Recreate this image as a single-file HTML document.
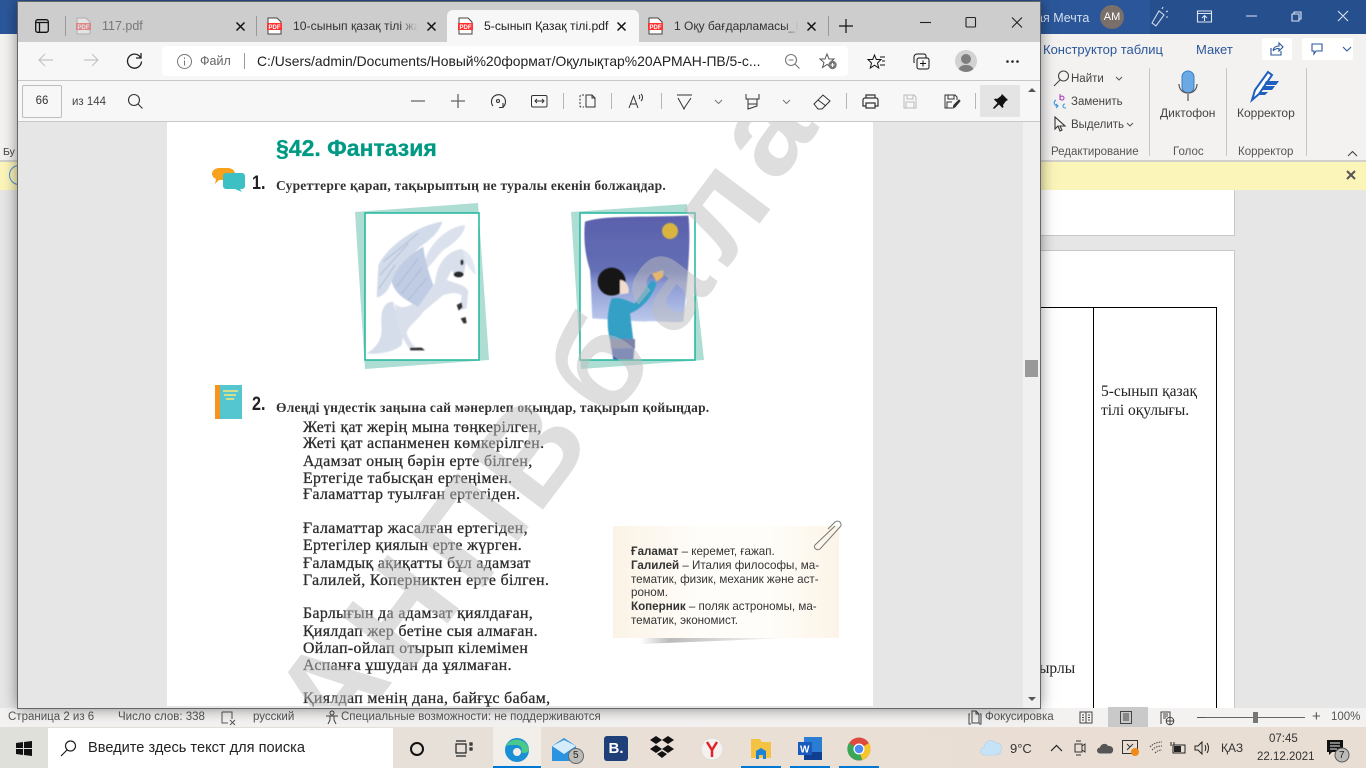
<!DOCTYPE html>
<html lang="ru"><head><meta charset="utf-8"><title>Word</title>
<style>
html,body{margin:0;padding:0;width:1366px;height:768px;overflow:hidden;background:#e6e6e6;font-family:"Liberation Sans",sans-serif}
.a{position:absolute}
.t{position:absolute;white-space:nowrap;line-height:16px;height:16px}
svg{position:absolute;overflow:visible}
.s{font-family:"Liberation Serif",serif;color:#2c2c2c;font-size:15.8px;letter-spacing:.38px;-webkit-text-stroke:.3px #2c2c2c;left:303px}
.sep{position:absolute;width:1px;background:#a8a8a8}
.n{font-size:11.6px;color:#333;left:631px}
.st{font-size:11.5px;color:#555;top:709px}
.w{position:absolute;width:100px;height:100px;line-height:100px;text-align:center;font-weight:700;font-size:130px;color:rgba(189,189,189,.5);transform:rotate(-53deg)}
.ser{font:15.5px/16px "Liberation Serif",serif;color:#222}
.tk{font:bold 13.5px/16px "Liberation Serif",serif;color:#333;letter-spacing:.2px;left:276px}
.num{font:bold 19px/18px "Liberation Sans",sans-serif;height:18px;color:#222;left:252px;transform:scaleX(.85);transform-origin:0 0}
</style></head><body>

<!-- Word window behind -->
<div class="a" style="left:0;top:0;width:1366px;height:34px;background:#2b579a"></div>
<div class="a" style="left:1150px;top:0;width:216px;height:34px;background:#264f8e"></div>
<div class="a" style="left:0;top:34px;width:1366px;height:126px;background:#f3f2f1"></div>
<div class="a" style="left:0;top:160px;width:1366px;height:2px;background:#d2d0ce"></div>
<div class="a" style="left:0;top:162px;width:1366px;height:28px;background:#fcf5b9"></div>
<div class="t" style="left:3px;top:144px;font-size:10.5px;color:#444">Бу</div>
<div class="a" style="left:9px;top:165px;width:18px;height:18px;border:1.5px solid #4a90d9;border-radius:50%"></div>
<div class="t" style="left:1036px;top:10px;font-size:12.5px;color:#d5dfee">ая Мечта</div>
<div class="a" style="left:1100px;top:5px;width:24px;height:24px;border-radius:50%;background:#7b6f69;color:#fff;font-size:11px;line-height:24px;text-align:center">АМ</div>
<svg style="left:1150px;top:6px" width="20" height="22" fill="none" stroke="#cfd9ea" stroke-width="1.1"><path d="M2 17 9 5l5 4-8 11zM12 3l1-2M16 6l2-1M16 11h2"/></svg>
<svg style="left:1197px;top:10px" width="16" height="14" fill="none" stroke="#dde5f1" stroke-width="1.1"><path d="M.5 1h14v11H.5zM.5 3.500h14M7.500 11V6M5 8l2.500-2.500L10 8"/></svg>
<svg style="left:1245px;top:10px" width="112" height="14" fill="none" stroke="#dde5f1" stroke-width="1.1"><path d="M1 6h11M47 4h7v7h-7zM49 4V2h7v7h-2M93 1l10 10M103 1 93 11"/></svg>
<div class="t" style="left:1043px;top:42px;font-size:13px;color:#2b579a">Конструктор таблиц</div>
<div class="t" style="left:1196px;top:42px;font-size:13px;color:#2b579a">Макет</div>
<div class="a" style="left:1262px;top:38px;width:30px;height:22px;background:#fff;border-radius:2px"></div>
<svg style="left:1270px;top:42px" width="14" height="14" fill="none" stroke="#2b579a" stroke-width="1.1"><path d="M1 6v7h10V9M3 8c1-3 3-4 6-4V1l4 4-4 4V6.500C6 6.500 4.500 7 3 9"/></svg>
<div class="a" style="left:1302px;top:38px;width:51px;height:22px;background:#fff;border-radius:2px"></div>
<svg style="left:1311px;top:43px" width="38" height="13" fill="none" stroke="#2b579a" stroke-width="1.1"><path d="M1 1h10v7H5L3 11V8H1zM32 4l4 4 4-4"/></svg>
<svg style="left:1053px;top:70px" width="17" height="17" fill="none" stroke="#444" stroke-width="1.1"><circle cx="10.500" cy="6" r="5"/><path d="M7 10 1 16"/></svg>
<div class="t" style="left:1071px;top:71px;font-size:11.500px;color:#444">Найти</div>
<svg style="left:1115px;top:76px" width="8" height="5" fill="none" stroke="#555"><path d="M1 1l3 3 3-3"/></svg>
<svg style="left:1052px;top:93px" width="17" height="17" fill="none" stroke="#3a96dd" stroke-width="1.100"><path d="M4 7C1 9 2 13 6 13M4 15l2-2-2-2M13 11a2 2 0 1 0 0 4h1"/><path d="M8 1v6M8 5a2 2 0 1 1 0 .1" stroke="#b146c2"/></svg>
<div class="t" style="left:1071px;top:94px;font-size:11.500px;color:#444">Заменить</div>
<svg style="left:1054px;top:116px" width="14" height="17" fill="none" stroke="#333" stroke-width="1.100"><path d="M1 1v12l3-3 2 5 2-1-2-4h5z"/></svg>
<div class="t" style="left:1071px;top:117px;font-size:11.500px;color:#444">Выделить</div>
<svg style="left:1126px;top:122px" width="8" height="5" fill="none" stroke="#555"><path d="M1 1l3 3 3-3"/></svg>
<div class="sep" style="left:1149px;top:68px;height:88px;background:#c8c6c4"></div>
<div class="sep" style="left:1226px;top:68px;height:88px;background:#c8c6c4"></div>
<div class="sep" style="left:1306px;top:68px;height:88px;background:#c8c6c4"></div>
<svg style="left:1178px;top:70px" width="20" height="32"><rect x="4" y="1" width="12" height="22" rx="6" fill="#6aa9e4" stroke="#3b7fc4"/><path d="M1 14c0 12 18 12 18 0M10 24v7" fill="none" stroke="#555" stroke-width="1.200"/></svg>
<div class="t" style="left:1160px;top:105px;font-size:12px;color:#444">Диктофон</div>
<svg style="left:1250px;top:70px" width="34" height="32"><path d="M2 30 5 20 18 2l4 3L9 24z" fill="#fff" stroke="#1f5fc0" stroke-width="2"/><path d="M16 11h13l-3 4H14zM13 16h12l-3 4H11zM10 22h8l-3 3H8z" fill="#1f5fc0"/></svg>
<div class="t" style="left:1237px;top:105px;font-size:12px;color:#444">Корректор</div>
<div class="t" style="left:1051px;top:144px;font-size:11.500px;color:#555">Редактирование</div>
<div class="t" style="left:1173px;top:144px;font-size:11.500px;color:#555">Голос</div>
<div class="t" style="left:1238px;top:144px;font-size:11.500px;color:#555">Корректор</div>
<svg style="left:1347px;top:150px" width="11" height="6" fill="none" stroke="#444" stroke-width="1.100"><path d="M1 6l4.500-4.500L10 6"/></svg>
<svg style="left:1346px;top:170px" width="10" height="10" fill="none" stroke="#555" stroke-width="2"><path d="M1 1l8 8M9 1 1 9"/></svg>

<!-- Doc area -->
<div class="a" style="left:1000px;top:190px;width:234px;height:45px;background:#fff;border-right:1px solid #c8c8c8;border-bottom:1px solid #c8c8c8"></div>
<div class="a" style="left:1000px;top:250px;width:234px;height:458px;background:#fff;border-right:1px solid #c8c8c8;border-top:1px solid #c8c8c8"></div>
<div class="a" style="left:1000px;top:307px;width:217px;height:1px;background:#000"></div>
<div class="a" style="left:1093px;top:307px;width:1px;height:401px;background:#000"></div>
<div class="a" style="left:1216px;top:307px;width:1px;height:401px;background:#000"></div>
<div class="t ser" style="left:1101px;top:384px">5-сынып қазақ</div>
<div class="t ser" style="left:1101px;top:403px">тілі оқулығы.</div>
<div class="t ser" style="left:1039px;top:661px">ырлы</div>

<!-- Status bar -->
<div class="a" style="left:0;top:708px;width:1366px;height:19px;background:#f3f2f1"></div>
<div class="a" style="left:1108px;top:707px;width:40px;height:20px;background:#c9c9c9"></div>
<div class="t st" style="left:8px">Страница 2 из 6</div>
<div class="t st" style="left:118px">Число слов: 338</div>
<svg style="left:221px;top:711px" width="16" height="14" fill="none" stroke="#555"><path d="M1 1h10v7M1 1v11h6M9 9l5 5M14 9 9 14"/></svg>
<div class="t st" style="left:253px">русский</div>
<svg style="left:325px;top:710px" width="15" height="15" fill="none" stroke="#444"><circle cx="7" cy="3" r="2"/><path d="M1 6h12M5 6v4l-2 4M9 6v4l2 4"/></svg>
<div class="t st" style="left:341px">Специальные возможности: не поддерживаются</div>
<svg style="left:968px;top:710px" width="14" height="15" fill="none" stroke="#444"><path d="M2 4H1v10h2M12 4h1v10h-2M4 1h4l3 3v9H4zM8 1v3h3"/></svg>
<div class="t st" style="left:985px">Фокусировка</div>
<svg style="left:1079px;top:711px" width="14" height="13" fill="none" stroke="#444"><path d="M1 1h12v11H1zM7 1v11M3 4h2M3 6.500h2M3 9h2M9 4h2M9 6.500h2M9 9h2"/></svg>
<svg style="left:1120px;top:711px" width="12" height="13" fill="none" stroke="#444"><path d="M.5.500h11v12H.5zM3 3h6M3 5h6M3 7h6M3 9h6"/></svg>
<svg style="left:1160px;top:711px" width="15" height="14" fill="none" stroke="#444"><path d="M1 13V1h9v6M3 3h5M3 5h5M3 7h3"/><circle cx="10" cy="10" r="3.800"/><path d="M6 10h8M10 6v8"/></svg>
<div class="a" style="left:1197px;top:717px;width:8px;height:1px;background:#555"></div>
<div class="a" style="left:1205px;top:717px;width:100px;height:1px;background:#666"></div>
<div class="a" style="left:1253px;top:712px;width:5px;height:11px;background:#777"></div>
<div class="t" style="left:1312px;top:709px;font-size:15px;color:#555">+</div>
<div class="t st" style="left:1331px">100%</div>

<!-- Taskbar -->
<div class="a" style="left:0;top:727px;width:1366px;height:41px;background:linear-gradient(90deg,#dfe0da,#e6e0d8 30%,#eadfd5 55%,#e9ded4)"></div>
<svg style="left:16px;top:741px" width="16" height="15" fill="#111"><path d="M0 2l7-1v6H0zM8 1l8-1v7H8zM0 8h7v6l-7-1zM8 8h8v7l-8-1z"/></svg>
<div class="a" style="left:48px;top:728px;width:345px;height:40px;background:#fff"></div>
<svg style="left:60px;top:740px" width="17" height="17" fill="none" stroke="#222" stroke-width="1.200"><circle cx="10.500" cy="6" r="5"/><path d="M7 10 1 16"/></svg>
<div class="t" style="left:88px;top:740px;font-size:14.600px;color:#222">Введите здесь текст для поиска</div>
<div class="a" style="left:410px;top:742px;width:10px;height:10px;border:2.200px solid #111;border-radius:50%"></div>
<svg style="left:455px;top:740px" width="18" height="17" fill="none" stroke="#222" stroke-width="1.200"><path d="M1 1h10M1 16h10M1 4h10v9H1zM15 3h2v2h-2zM15 8h2v2h-2z"/></svg>
<div class="a" style="left:493px;top:727px;width:48px;height:41px;background:#f2efea"></div>
<div class="a" style="left:493px;top:766px;width:48px;height:2px;background:#0078d4"></div>
<svg style="left:504px;top:737px" width="26" height="26"><circle cx="13" cy="13" r="12" fill="#1b8fd6"/><path d="M2 9C6 0 22 0 25 12c0 4-5 5-8 3 2-3 0-7-5-7C7 8 4 8 2 9z" fill="#4ac98a"/><circle cx="13" cy="15" r="4" fill="#f2efea"/></svg>
<svg style="left:551px;top:737px" width="38" height="28"><path d="M1 9 13 1l12 8v15H1z" fill="#2b93e0"/><path d="M1 9l12 8 12-8-12-6z" fill="#d7ecfb"/><circle cx="25" cy="19" r="7.500" fill="#bdbdb8" stroke="#666"/></svg>
<div class="t" style="left:573px;top:748px;font-size:10px;color:#222">5</div>
<div class="a" style="left:604px;top:736px;width:24px;height:25px;border-radius:3px;background:#1e3f77;color:#fff;font:bold 15px/25px 'Liberation Sans',sans-serif;text-align:center">B.</div>
<svg style="left:649px;top:736px" width="26" height="24" fill="#111"><path d="M7 0l6 4-6 4-6-4zM19 0l6 4-6 4-6-4zM7 9l6 4-6 4-6-4zM19 9l6 4-6 4-6-4zM13 15l5 3-5 4-5-4z"/></svg>
<svg style="left:700px;top:737px" width="24" height="24"><circle cx="12" cy="12" r="11" fill="#f4f1ee" stroke="#ddd"/><path d="M7 5l5 8 5-8M12 13v7" fill="none" stroke="#e0222b" stroke-width="2.500"/></svg>
<svg style="left:750px;top:738px" width="22" height="22"><path d="M1 1h9l2 3h9v16H1z" fill="#f5c344"/><path d="M6 21v-8l5-3 5 3v8h-3v-4H9v4z" fill="#1d83d4"/></svg>
<div class="a" style="left:741px;top:766px;width:40px;height:2px;background:#0078d4"></div>
<svg style="left:798px;top:737px" width="26" height="24"><path d="M6 0h18v23H6z" fill="#2b7cd3"/><path d="M6 15h18v8H6z" fill="#103f91"/><rect x="0" y="5" width="14" height="13" fill="#185abd"/><text x="2" y="15.500" font-size="10" font-weight="700" fill="#fff" font-family="Liberation Sans">W</text></svg>
<div class="a" style="left:790px;top:766px;width:40px;height:2px;background:#0078d4"></div>
<svg style="left:847px;top:737px" width="24" height="24"><circle cx="12" cy="12" r="11.500" fill="#dd4b3e"/><path d="M12 12 22 6a11.500 11.500 0 0 1-7 17z" fill="#f6c42b"/><path d="M12 12 15 23A11.500 11.500 0 0 1 2 6z" fill="#3aa757"/><circle cx="12" cy="12" r="5.500" fill="#fff"/><circle cx="12" cy="12" r="4.300" fill="#4c8bf5"/></svg>
<div class="a" style="left:839px;top:766px;width:40px;height:2px;background:#0078d4"></div>
<svg style="left:980px;top:738px" width="24" height="18"><path d="M5 17a4 4 0 0 1-1-8C5 3 12 0 15 5c4-1 8 3 6 8-1 3-3 4-5 4z" fill="#c6e2f7" stroke="#a9d0ee" stroke-width=".6"/></svg>
<div class="t" style="left:1010px;top:741px;font-size:13px;color:#333">9°C</div>
<svg style="left:1050px;top:744px" width="13" height="8" fill="none" stroke="#222" stroke-width="1.200"><path d="M1 7l5.500-5.500L12 7"/></svg>
<svg style="left:1074px;top:740px" width="13" height="16" fill="none" stroke="#333"><path d="M1 4h7v8H1zM8 6l3-2v8l-3-2M2 1h5M2 15h5"/></svg>
<svg style="left:1096px;top:743px" width="18" height="11"><path d="M4 10.500a3 3 0 0 1 0-6C5 0 11 0 12 3c3-.5 6 2 5 5-.5 2-2 2.500-3 2.500z" fill="#555"/></svg>
<svg style="left:1122px;top:739px" width="18" height="18"><rect x=".5" y="1.500" width="15" height="13" fill="none" stroke="#333"/><path d="M5 5l3 3-3 3M11 5 8 8" fill="none" stroke="#333"/><circle cx="13" cy="13" r="4" fill="#f08a16"/></svg>
<svg style="left:1149px;top:741px" width="14" height="15" fill="none" stroke="#444" stroke-dasharray="1.500 1"><path d="M1 6c4-4 8-5 12-5M3 9c3-3 6-4 10-4M6 12c2-2 4-3 7-3"/></svg>
<svg style="left:1170px;top:741px" width="17" height="14"><rect x="3" y="4" width="12" height="8" fill="none" stroke="#222"/><rect x="4" y="5" width="7" height="6" fill="#222"/><path d="M1 1v4M4 1v3" stroke="#222"/></svg>
<svg style="left:1194px;top:741px" width="15" height="14" fill="none" stroke="#222"><path d="M1 5h3l4-4v12L4 9H1zM11 4c1 2 1 4 0 6M13 2c2 3 2 7 0 10"/></svg>
<div class="t" style="left:1221px;top:740px;font-size:12px;color:#333">ҚАЗ</div>
<div class="t" style="left:1269px;top:731px;font-size:11.500px;color:#333">07:45</div>
<div class="t" style="left:1257px;top:749px;font-size:11.500px;color:#333">22.12.2021</div>
<svg style="left:1327px;top:740px" width="24" height="24"><path d="M0 0h16v12H5l-3 3v-3H0z" fill="#111"/><path d="M3 3h10M3 6h10M3 9h7" stroke="#eee"/><circle cx="15" cy="15" r="7" fill="#bcbab6" stroke="#555"/></svg>
<div class="t" style="left:1339px;top:748px;font-size:10px;color:#222">7</div>

<!-- Edge window -->
<div class="a" style="left:18px;top:2px;width:1022px;height:706px;background:#e6e6e6;box-shadow:0 0 14px rgba(0,0,0,.5);outline:1px solid #666"></div>
<div class="a" style="left:18px;top:2px;width:1022px;height:40px;background:#cdcdcd"></div>
<div class="a" style="left:18px;top:42px;width:1022px;height:38px;background:#f7f7f7"></div>
<div class="a" style="left:18px;top:80px;width:1022px;height:1px;background:#c8c8c8"></div>
<div class="a" style="left:18px;top:81px;width:1022px;height:40px;background:#f7f7f7"></div>
<div class="a" style="left:18px;top:121px;width:1022px;height:1px;background:#c8c8c8"></div>

<!-- tabs -->
<svg style="left:35px;top:19px" width="14" height="14" fill="none" stroke="#111" stroke-width="1.300"><rect x=".7" y=".7" width="12.600" height="12.600" rx="2"/><path d="M.7 3.500h12.600M4.500 3.500v9.800"/></svg>
<div class="sep" style="left:65px;top:16px;height:20px;background:#999"></div>
<div class="sep" style="left:256px;top:16px;height:20px;background:#999"></div>
<div class="sep" style="left:828px;top:16px;height:20px;background:#999"></div>
<div class="a" style="left:447px;top:10px;width:192px;height:32px;background:#f7f7f7;border-radius:6px 6px 0 0"></div>
<svg style="left:76px;top:18px" width="15" height="16" opacity=".45"><path d="M1 0h9l4 4v12H1z" fill="#fff" stroke="#888"/><rect x="0" y="5" width="15" height="7" fill="#e33"/><text x="1.500" y="11" font-size="6" font-weight="700" fill="#fff" font-family="Liberation Sans">PDF</text></svg>
<div class="t" style="left:102px;top:18px;font-size:12.500px;color:#777">117.pdf</div>
<svg style="left:236px;top:22px" width="9" height="9" fill="none" stroke="#111" stroke-width="1.500"><path d="M.5.500l8 8M8.500.500l-8 8"/></svg>
<svg style="left:267px;top:18px" width="15" height="16"><path d="M1 0h9l4 4v12H1z" fill="#fff" stroke="#444"/><rect x="0" y="5" width="15" height="7" fill="#f33"/><text x="1.500" y="11" font-size="6" font-weight="700" fill="#fff" font-family="Liberation Sans">PDF</text></svg>
<div class="t" style="left:293px;top:18px;font-size:12.200px;color:#333;width:125px;overflow:hidden;-webkit-mask-image:linear-gradient(90deg,#000 85%,transparent)">10-сынып қазақ тілі жазба</div>
<svg style="left:427px;top:22px" width="9" height="9" fill="none" stroke="#111" stroke-width="1.500"><path d="M.5.500l8 8M8.500.500l-8 8"/></svg>
<svg style="left:458px;top:18px" width="15" height="16"><path d="M1 0h9l4 4v12H1z" fill="#fff" stroke="#444"/><rect x="0" y="5" width="15" height="7" fill="#f33"/><text x="1.500" y="11" font-size="6" font-weight="700" fill="#fff" font-family="Liberation Sans">PDF</text></svg>
<div class="t" style="left:484px;top:18px;font-size:12.200px;color:#222">5-сынып Қазақ тілі.pdf</div>
<svg style="left:617px;top:22px" width="9" height="9" fill="none" stroke="#111" stroke-width="1.500"><path d="M.5.500l8 8M8.500.500l-8 8"/></svg>
<svg style="left:648px;top:18px" width="15" height="16"><path d="M1 0h9l4 4v12H1z" fill="#fff" stroke="#444"/><rect x="0" y="5" width="15" height="7" fill="#f33"/><text x="1.500" y="11" font-size="6" font-weight="700" fill="#fff" font-family="Liberation Sans">PDF</text></svg>
<div class="t" style="left:674px;top:18px;font-size:12px;color:#333;width:124px;overflow:hidden;-webkit-mask-image:linear-gradient(90deg,#000 90%,transparent)">1 Оқу бағдарламасы_Қазақ</div>
<svg style="left:807px;top:22px" width="9" height="9" fill="none" stroke="#111" stroke-width="1.500"><path d="M.5.500l8 8M8.500.500l-8 8"/></svg>
<svg style="left:839px;top:19px" width="14" height="14" fill="none" stroke="#111" stroke-width="1.200"><path d="M7 0v14M0 7h14"/></svg>
<svg style="left:920px;top:17px" width="104" height="12" fill="none" stroke="#222" stroke-width="1.100"><path d="M0 5.500h11"/><rect x="46" y=".5" width="9.500" height="9.500" rx="1"/><path d="M92 .5l10 10M102 .5l-10 10"/></svg>

<!-- address -->
<svg style="left:38px;top:53px" width="62" height="14" fill="none" stroke="#c4c4c4" stroke-width="1.200"><path d="M15 7H1M7 1 1 7l6 6M46 7h14M54 1l6 6-6 6"/></svg>
<svg style="left:126px;top:52px" width="17" height="17" fill="none" stroke="#222" stroke-width="1.300"><path d="M14.500 5.500a7 7 0 1 0 1 4M15 1v5h-5"/></svg>
<div class="a" style="left:162px;top:46px;width:686px;height:30px;background:#fff;border-radius:4px"></div>
<svg style="left:177px;top:54px" width="15" height="15" fill="none" stroke="#777"><circle cx="7.500" cy="7.500" r="7"/><path d="M7.500 6.500v5M7.500 3.500v1.500"/></svg>
<div class="t" style="left:200px;top:53px;font-size:12.500px;color:#666">Файл</div>
<div class="sep" style="left:244px;top:53px;height:16px;background:#999"></div>
<div class="t" style="left:257px;top:53px;font-size:13.900px;color:#222">C:/Users/admin/Documents/Новый%20формат/Оқулықтар%20АРМАН-ПВ/5-с...</div>
<svg style="left:785px;top:54px" width="15" height="15" fill="none" stroke="#777" stroke-width="1.100"><circle cx="6" cy="6" r="5.500"/><path d="M3.500 6h5M10 10l4.500 4.500"/></svg>
<svg style="left:820px;top:53px" width="18" height="17"><path d="M7 1l2 5h5l-4 3.500 1.500 5L7 11.500 2.500 14.500 4 9.500 0 6h5z" fill="none" stroke="#555"/><circle cx="12.500" cy="12" r="4.200" fill="#777"/><path d="M10.500 12h4M12.500 10v4" stroke="#fff"/></svg>
<svg style="left:868px;top:54px" width="18" height="15" fill="none" stroke="#111"><path d="M6.500 1l1.800 4.500h4.700L9.500 9l1.200 5-4.200-2.800L2.300 14l1.200-5L0 5.500h4.700zM12 3h5M14 7h3M12 11h5"/></svg>
<svg style="left:912px;top:52px" width="18" height="18" fill="none" stroke="#111"><path d="M5 2h7a2 2 0 0 1 2 2v2M2 11V5a3 3 0 0 1 3-3"/><rect x="5" y="6" width="12" height="11" rx="2"/><path d="M11 8.500v6M8 11.500h6"/></svg>
<div class="a" style="left:955px;top:50px;width:22px;height:22px;border-radius:50%;background:#d2d2d2;overflow:hidden"><div class="a" style="left:6px;top:4px;width:10px;height:10px;background:#7e7e7e;border-radius:50%"></div><div class="a" style="left:3px;top:15px;width:16px;height:7px;background:#7e7e7e;border-radius:8px 8px 0 0"></div></div>
<svg style="left:1006px;top:60px" width="14" height="3" fill="#222"><circle cx="1.500" cy="1.500" r="1.300"/><circle cx="6.500" cy="1.500" r="1.300"/><circle cx="11.500" cy="1.500" r="1.300"/></svg>

<!-- pdf toolbar -->
<div class="a" style="left:22px;top:85px;width:38px;height:31px;border:1px solid #bdbdbd;border-radius:2px;background:#f7f7f7;font-size:11.500px;line-height:31px;text-align:center;color:#333">66</div>
<div class="t" style="left:72px;top:94px;font-size:11.500px;color:#444">из 144</div>
<svg style="left:128px;top:94px" width="15" height="15" fill="none" stroke="#333" stroke-width="1.100"><circle cx="6" cy="6" r="5.500"/><path d="M10 10l4.500 4.500"/></svg>
<svg style="left:410px;top:93px" width="56" height="16" fill="none" stroke="#666" stroke-width="1.300"><path d="M1 8h14M41 8h14M48 1v14"/></svg>
<svg style="left:490px;top:93px" width="17" height="17" fill="none" stroke="#333" stroke-width="1.100"><path d="M3 13A7 7 0 1 1 13 14M13 10v4.500h-4"/><circle cx="8" cy="8" r="1.500"/></svg>
<svg style="left:531px;top:95px" width="17" height="13" fill="none" stroke="#333"><rect x=".5" y=".5" width="15.500" height="11.500" rx="1.500"/><path d="M4 6h9M6 4 4 6l2 2M11 4l2 2-2 2"/></svg>
<div class="sep" style="left:563px;top:93px;height:16px;background:#b5b5b5"></div>
<svg style="left:579px;top:94px" width="17" height="14" fill="none" stroke="#333"><path d="M5 1H2a1 1 0 0 0-1 1v10a1 1 0 0 0 1 1h3" stroke-dasharray="2 1.500"/><path d="M7 1h6l3 3v9H7zM13 1v3h3"/></svg>
<div class="sep" style="left:611px;top:93px;height:16px;background:#b5b5b5"></div>
<svg style="left:628px;top:94px" width="16" height="15" fill="none" stroke="#333"><path d="M1 14 5.500 2 10 14M3 10h5M11 1c1 1 1 3 0 4M13 0c2 2 2 5 0 7"/></svg>
<div class="sep" style="left:661px;top:93px;height:16px;background:#b5b5b5"></div>
<svg style="left:677px;top:94px" width="50" height="16" fill="none" stroke="#333"><path d="M0 1h15M1 4l5 9 1 2 1-2 6-9"/><path d="M38 6l3.500 3.500L45 6" stroke="#777"/></svg>
<svg style="left:745px;top:94px" width="50" height="16" fill="none" stroke="#333"><path d="M1 0v5h13V0M3 5v5h9V5M3 10v5l9-3v-2"/><path d="M38 6l3.500 3.500L45 6" stroke="#777"/></svg>
<svg style="left:813px;top:94px" width="18" height="16" fill="none" stroke="#333"><path d="M1 10 10 1l7 6-8 8H5zM5 6l8 6"/></svg>
<div class="sep" style="left:846px;top:93px;height:16px;background:#b5b5b5"></div>
<svg style="left:862px;top:94px" width="17" height="15" fill="none" stroke="#333" stroke-width="1.200"><path d="M4 4V1h9v3M4 12H1V6a2 2 0 0 1 2-2h11a2 2 0 0 1 2 2v6h-3M4 9h9v5H4z"/></svg>
<svg style="left:903px;top:94px" width="14" height="15" fill="none" stroke="#bbb"><path d="M1 1h10l2 2v11H1zM4 1v4h6V1M3 14V8h8v6"/></svg>
<svg style="left:944px;top:94px" width="16" height="15" fill="none" stroke="#333"><path d="M8 14H1V1h10l2 2v3M4 1v4h6V1M3 14V8h5"/><path d="M9 14l1-3 5-5 1 1-5 6z" fill="#333"/></svg>
<div class="sep" style="left:975px;top:93px;height:16px;background:#b5b5b5"></div>
<div class="a" style="left:980px;top:85px;width:40px;height:32px;background:#e4e4e4;border-radius:2px"></div>
<svg style="left:992px;top:94px" width="16" height="16"><path d="M10 0l6 6-2 1-3 4 .5 2-1 1-3.500-3.500L2 15 1 14l4.500-5L2 5.500l1-1 2 .5 4-3z" fill="#111"/></svg>

<!-- scrollbar -->
<div class="a" style="left:1023px;top:122px;width:17px;height:586px;background:#f0f0f0"></div>
<svg style="left:1028px;top:87px" width="8" height="6"><path d="M0 5l4-4 4 4z" fill="#555"/></svg>
<div class="a" style="left:1025px;top:360px;width:13px;height:17px;background:#999"></div>
<svg style="left:1028px;top:696px" width="8" height="6"><path d="M0 1h8L4 5z" fill="#555"/></svg>

<!-- PDF page -->
<div class="a" style="left:167px;top:122px;width:706px;height:584px;background:#fff"></div>
<div class="a" style="left:0;top:0;width:1366px;height:768px">
<div class="t" style="left:276px;top:136px;font:bold 23px/24px 'Liberation Sans',sans-serif;height:24px;color:#009a84;-webkit-text-stroke:.3px #009a84">§42. Фантазия</div>
<svg style="left:211px;top:167px" width="36" height="28"><path d="M1 7a7 6 0 0 1 7-6h9a7 6 0 0 1 7 6 7 6 0 0 1-7 6h-9l-4 4 1-5a6 6 0 0 1-4-5z" fill="#f7a11c"/><path d="M12 9a3 3 0 0 1 3-3h16a3 3 0 0 1 3 3v10a3 3 0 0 1-3 3h-2l2 3-7-3H15a3 3 0 0 1-3-3z" fill="#3cc0c4"/></svg>
<div class="t num" style="top:175px">1.</div>
<div class="t tk" style="top:178px">Суреттерге қарап, тақырыптың не туралы екенін болжаңдар.</div>

<svg style="left:0;top:0" width="1366" height="768">
<defs>
<filter id="b" x="-20%" y="-20%" width="140%" height="140%"><feGaussianBlur stdDeviation="1.500"/></filter>
<linearGradient id="sky" x1="0" y1="0" x2="0" y2="1"><stop offset="0" stop-color="#5a60ab"/><stop offset=".52" stop-color="#6470b6"/><stop offset=".64" stop-color="#8d9ad4"/><stop offset="1" stop-color="#bccaee"/></linearGradient>
</defs>
<polygon points="355,212 478,203 489,360 365,369" fill="#aeddd4"/>
<rect x="365" y="213" width="114" height="147" fill="#fff"/>
<polygon points="571,212 687,204 704,360 581,369" fill="#aeddd4"/>
<rect x="580" y="213" width="115" height="147" fill="#fff"/>
<g transform="translate(355 205) scale(.33333)">
 <!-- pegasus -->
 <g filter="url(#b)">
  <path d="M65 278 70 180C100 120 190 60 262 50 250 90 215 110 190 130 150 170 120 200 110 230 100 255 90 270 65 278Z" fill="#d2dbe9"/>
  <path d="M205 190C210 130 270 65 330 60 330 90 290 120 265 135 240 160 225 190 205 195Z" fill="#dbe2ee"/>
  <path d="M115 290C85 290 75 320 80 370 80 410 60 430 35 445 70 450 120 440 140 420 150 380 125 340 115 290Z" fill="#d6ddea"/>
  <path d="M120 295C140 320 175 300 200 275L240 235C245 180 270 140 320 132 335 140 335 170 330 190L325 215 300 215 290 195 275 225C300 235 335 240 340 260L335 310 315 315 320 270C300 260 285 265 265 270L205 320C190 345 160 360 155 385 165 410 175 425 190 430L165 435 135 385C130 370 125 345 120 295Z" fill="#d9e0ec"/>
  <path d="M110 230C120 190 160 150 205 125 210 170 225 215 235 240L190 305C160 290 120 270 110 230Z" fill="#c0cce3"/>
  <path d="M325 135C345 140 360 170 362 210 345 195 335 180 330 165Z" fill="#e3e9f2"/>
  <path d="M125 245 190 160M140 265 200 190M160 285 215 220M85 170 190 85M75 210 160 115M72 250 120 180" stroke="#a8b6d3" stroke-width="2.500" fill="none"/>
  <ellipse cx="311" cy="208" rx="15" ry="9" fill="#2c2c2c"/>
  <ellipse cx="321" cy="172" rx="5" ry="9" fill="#333"/>
  <path d="M305 300 320 292 323 307 311 317ZM317 340 332 336 335 354 326 356ZM165 428H200L210 436H165Z" fill="#333"/>
 </g>
 <!-- boy -->
 <path d="M690 50C750 30 850 38 1000 32 1008 100 1000 200 985 350 940 355 900 345 870 350L712 340C710 300 708 230 705 195 690 150 685 100 690 50Z" fill="url(#sky)" filter="url(#b)"/>
 <circle cx="945" cy="78" r="24" fill="#d9b53f" filter="url(#b)"/>
 <g filter="url(#b)">
  <path d="M770 280C800 275 820 290 840 295L890 225 905 235C895 270 865 310 825 325L835 405H765C755 370 755 320 770 280Z" fill="#35a0c6"/>
  <path d="M765 402H840L835 465H775Z" fill="#4a5fb0"/>
  <path d="M765 402H840V430H768Z" fill="#7b82a8"/>
  <path d="M890 205 925 195 925 215 905 230Z" fill="#e6b66d"/>
  <circle cx="770" cy="230" r="42" fill="#151515"/>
  <path d="M795 225C815 225 825 250 820 265L795 268Z" fill="#f2dccf"/>
 </g>
</g>
<rect x="365" y="213" width="114" height="147" fill="none" stroke="#1fb59b" stroke-width="1.500"/>
<rect x="580" y="213" width="115" height="147" fill="none" stroke="#1fb59b" stroke-width="1.500"/>
<!-- book -->
<rect x="215" y="385" width="27" height="34" fill="#53c6cf"/>
<rect x="215" y="385" width="5" height="34" fill="#f7941d"/>
<path d="M223 391h15M224 395h12M226 399h8" stroke="#fbe87a" stroke-width="1.500"/>
</svg>

<div class="t num" style="top:396px">2.</div>
<div class="t tk" style="top:400px">Өлеңді үндестік заңына сай мәнерлеп оқыңдар, тақырып қойыңдар.</div>

<div class="t s" style="top:420px">Жеті қат жерің мына төңкерілген,</div>
<div class="t s" style="top:436px">Жеті қат аспанменен көмкерілген.</div>
<div class="t s" style="top:454px">Адамзат оның бәрін ерте білген,</div>
<div class="t s" style="top:471px">Ертегіде табысқан ертеңімен.</div>
<div class="t s" style="top:487px">Ғаламаттар туылған ертегіден.</div>
<div class="t s" style="top:521px">Ғаламаттар жасалған ертегіден,</div>
<div class="t s" style="top:538px">Ертегілер қиялын ерте жүрген.</div>
<div class="t s" style="top:556px">Ғаламдық ақиқатты бұл адамзат</div>
<div class="t s" style="top:573px">Галилей, Коперниктен ерте білген.</div>
<div class="t s" style="top:606px">Барлығын да адамзат қиялдаған,</div>
<div class="t s" style="top:624px">Қиялдап жер бетіне сыя алмаған.</div>
<div class="t s" style="top:641px">Ойлап-ойлап отырып кілемімен</div>
<div class="t s" style="top:658px">Аспанға ұшудан да ұялмаған.</div>
<div class="t s" style="top:691px">Қиялдап менің дана, байғұс бабам,</div>

<!-- note -->
<div class="a" style="left:613px;top:526px;width:226px;height:112px;background:linear-gradient(90deg,#fbf3e6,#fffdfa 40%,#fffdf9 70%,#fcf4e7)"></div>
<div class="a" style="left:640px;top:638px;width:150px;height:6px;background:linear-gradient(90deg,#fff,#bbb 20%,#ddd 60%,#fff);clip-path:polygon(0 100%,100% 0,0 0)"></div>
<div class="t n" style="top:544px"><b>Ғаламат</b> – керемет, ғажап.</div>
<div class="t n" style="top:558px"><b>Галилей</b> – Италия философы, ма-</div>
<div class="t n" style="top:572px">тематик, физик, механик және аст-</div>
<div class="t n" style="top:585px">роном.</div>
<div class="t n" style="top:599px"><b>Коперник</b> – поляк астрономы, ма-</div>
<div class="t n" style="top:613px">тематик, экономист.</div>
<svg style="left:813px;top:519px" width="30" height="32" fill="none" stroke="#777" stroke-width="1"><path d="M22 7 2 26c-2 3 2 6 5 4L27 8c3-3-1-8-5-5L15 10"/></svg>

<!-- watermark -->
<div class="a" style="left:167px;top:122px;width:706px;height:584px;overflow:hidden">
<div class="w" style="left:113px;top:518px">А</div>
<div class="w" style="left:183px;top:440px">Н</div>
<div class="w" style="left:253px;top:358px">П</div>
<div class="w" style="left:313px;top:280px">В</div>
<div class="w" style="left:380px;top:192px">б</div>
<div class="w" style="left:443px;top:112px">а</div>
<div class="w" style="left:498px;top:36px">л</div>
<div class="w" style="left:545px;top:-42px">а</div>
</div>
</div>
</body></html>
